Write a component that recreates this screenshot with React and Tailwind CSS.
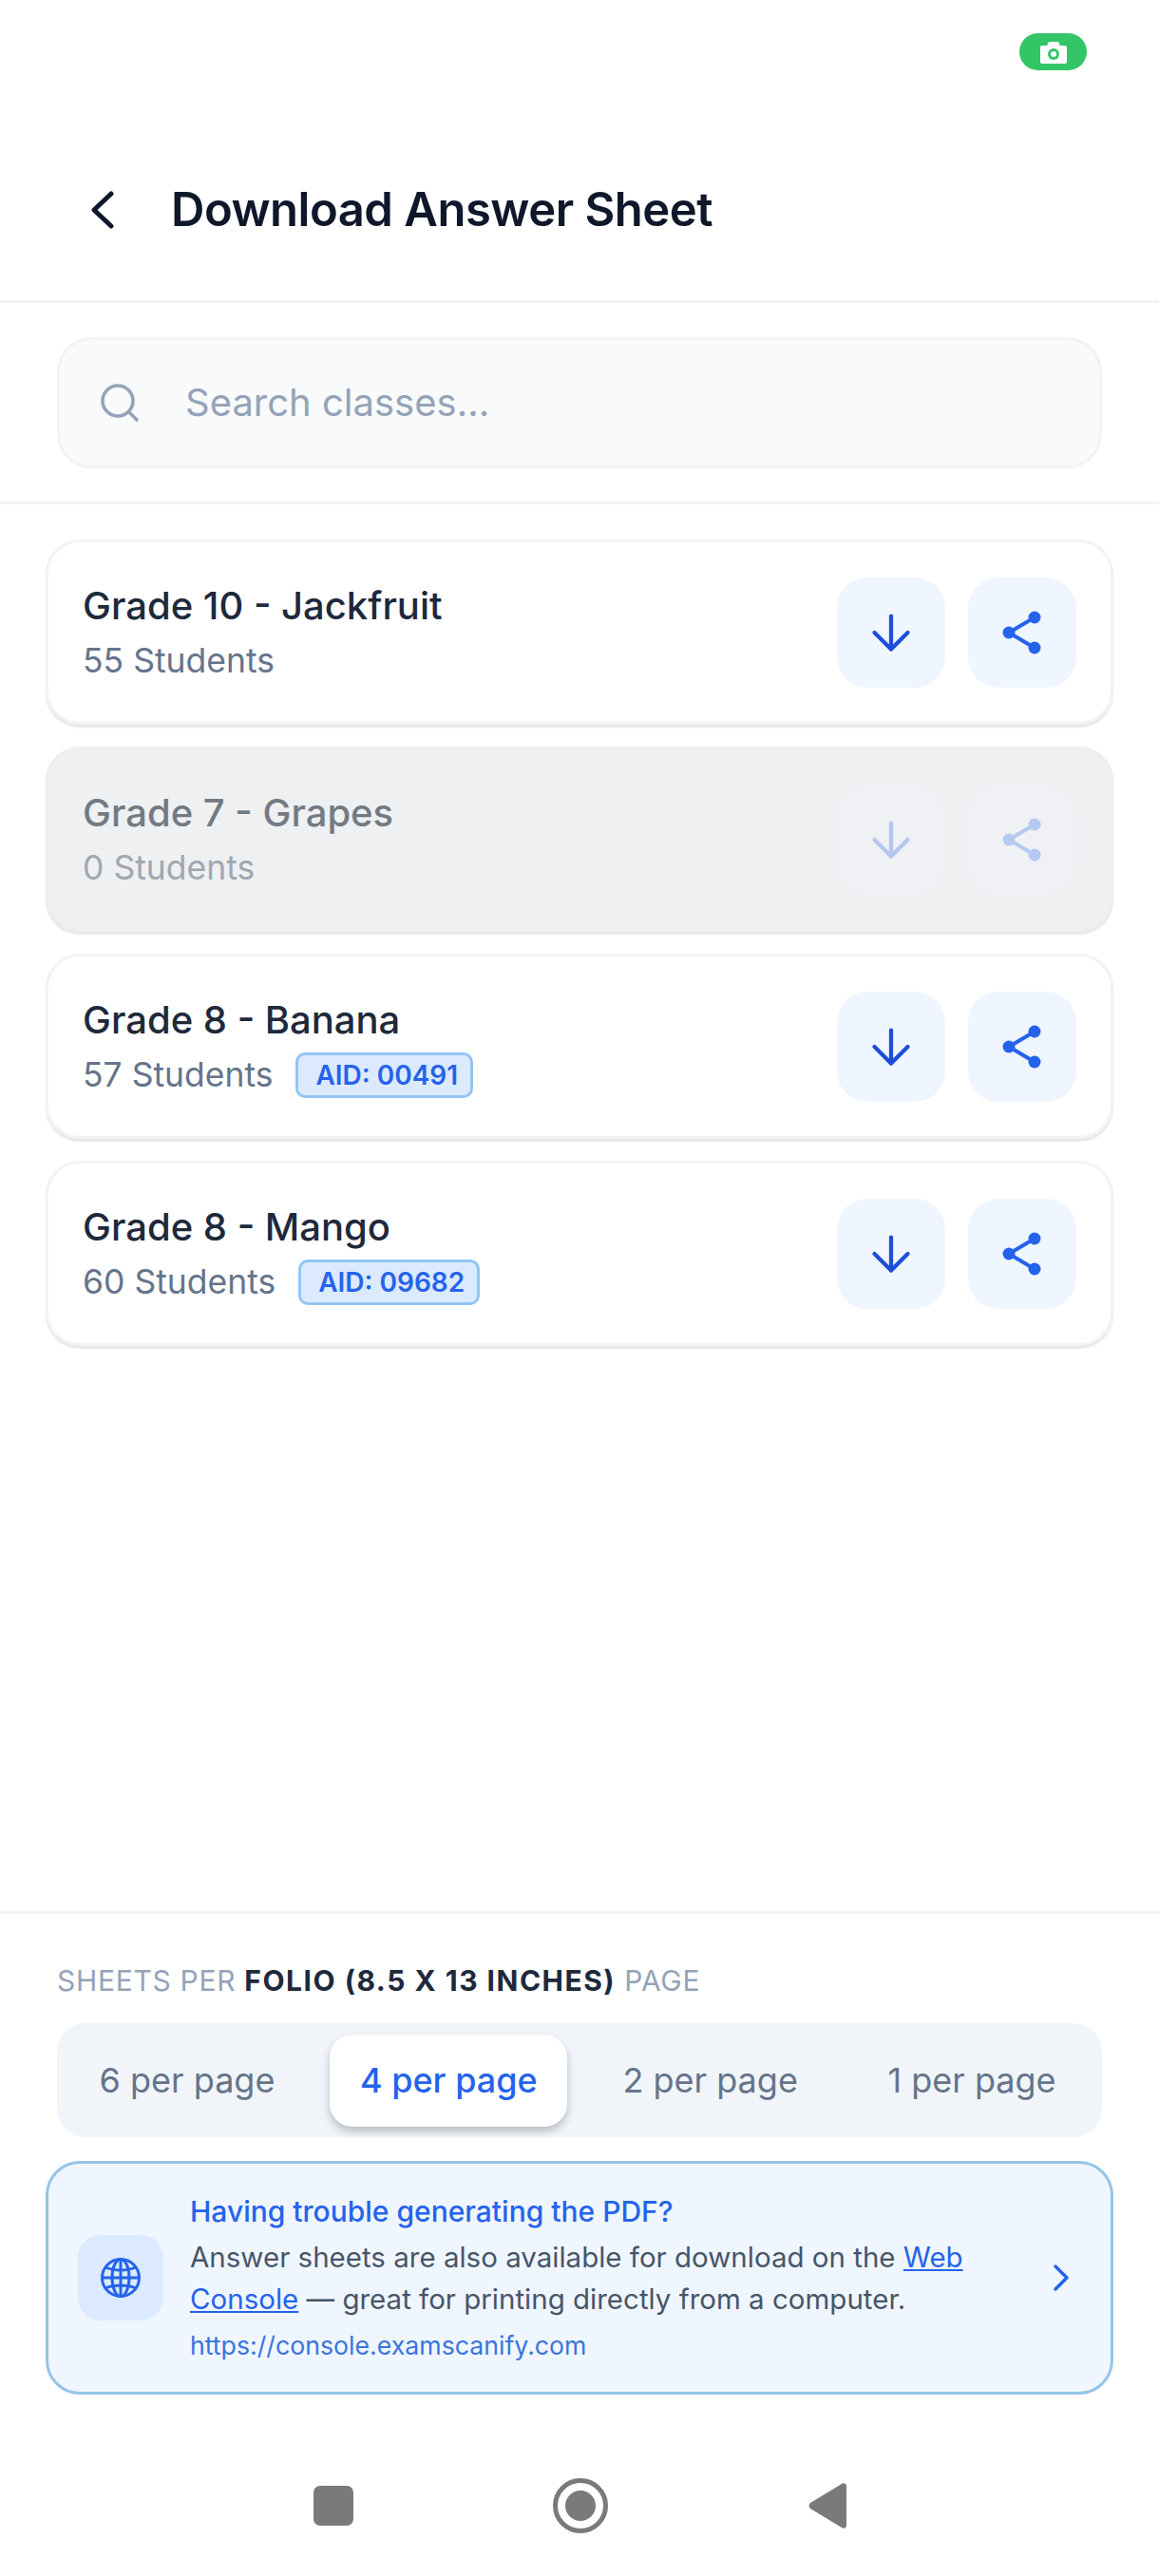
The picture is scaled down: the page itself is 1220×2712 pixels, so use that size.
import React from 'react';
import { ArrowDown, Search } from 'lucide-react';

const classes = [
  { name: 'Grade 10 - Jackfruit', students: '55 Students' },
  { name: 'Grade 7 - Grapes', students: '0 Students', disabled: true },
  { name: 'Grade 8 - Banana', students: '57 Students', aid: '00491' },
  { name: 'Grade 8 - Mango', students: '60 Students', aid: '09682' },
];

const pageOptions = ['6 per page', '4 per page', '2 per page', '1 per page'];

const ShareIcon = () => (
  <svg width="48" height="48" viewBox="0 0 48 48" fill="currentColor" stroke="currentColor">
    <path d="M37 8 10 24 37 40" fill="none" strokeWidth="4" />
    <circle cx="37" cy="8" r="6.5" strokeWidth="0" />
    <circle cx="10" cy="24" r="6.5" strokeWidth="0" />
    <circle cx="37" cy="40" r="6.5" strokeWidth="0" />
  </svg>
);

const GlobeIcon = () => (
  <svg width="44" height="44" viewBox="0 0 44 44" fill="none" stroke="currentColor" strokeWidth="3">
    <circle cx="22" cy="22" r="19.5" />
    <ellipse cx="22" cy="22" rx="9" ry="19.5" />
    <path d="M22 2.5v39M2.5 22h39M6 11c9 4 23 4 32 0M6 33c9-4 23-4 32 0" />
  </svg>
);

const ClassCard = ({ item }) => (
  <div
    className={`flex h-[195px] items-center justify-between rounded-[36px] border-[3px] pl-[36px] pr-[36px] shadow-[0_3px_2px_rgba(15,23,42,0.1)] ${
      item.disabled ? 'border-[#eceef0] bg-[#eef0f2]' : 'border-[#f1f3f5] bg-white'
    }`}
  >
    <div className="flex flex-col">
      <span className={`text-[40px] leading-[54px] font-medium ${item.disabled ? 'text-[#737a83]' : 'text-[#1e293b]'}`}>
        {item.name}
      </span>
      <div className="mt-[6px] flex h-[50px] items-center">
        <span className={`text-[35.5px] leading-[50px] ${item.disabled ? 'text-[#a1a7af]' : 'text-[#64748b]'}`}>
          {item.students}
        </span>
        {item.aid && (
          <span className="ml-[24px] flex h-[48px] items-center rounded-[10px] border-[3px] border-[#93c5f3] bg-[#dbeafe] pr-[13px] pl-[18px] text-[28px] font-semibold text-[#2563eb]">
            AID: {item.aid}
          </span>
        )}
      </div>
    </div>
    <div className="flex gap-[24px]">
      <button
        className={`flex h-[116px] w-[114px] items-center justify-center rounded-[32px] ${
          item.disabled ? 'bg-[#eff1f4] text-[#b5c7ee]' : 'bg-[#eff6ff] text-[#1d4ed8]'
        }`}
      >
        <ArrowDown size={60} strokeWidth={1.7} />
      </button>
      <button
        className={`flex h-[116px] w-[114px] items-center justify-center rounded-[32px] ${
          item.disabled ? 'bg-[#eff1f4] text-[#b5c9f2]' : 'bg-[#eff6ff] text-[#2563eb]'
        }`}
      >
        <ShareIcon />
      </button>
    </div>
  </div>
);

export default function App() {
  return (
    <div className="flex h-[2712px] w-[1220px] flex-col overflow-hidden bg-white font-['Inter','Noto_Sans',sans-serif]">
      {/* Status bar */}
      <div className="flex h-[110px] justify-end pt-[35px] pr-[76px]">
        <div className="flex h-[39px] w-[71px] items-center justify-center rounded-full bg-[#34c566]">
          <svg width="28" height="24" viewBox="0 0 28 24" fill="white">
            <path d="M9 1h10l2 4h5a2 2 0 0 1 2 2v15a2 2 0 0 1-2 2H2a2 2 0 0 1-2-2V7a2 2 0 0 1 2-2h5z" />
            <circle cx="14" cy="14" r="6" fill="#34c566" />
            <circle cx="14" cy="14" r="3" fill="white" />
          </svg>
        </div>
      </div>

      {/* Header */}
      <div className="flex h-[209px] items-center border-b-[3px] border-[#f1f3f5] pt-[16px] pl-[95px]">
        <svg width="26" height="40" viewBox="0 0 26 40" fill="none" stroke="#0f172a" strokeWidth="5" strokeLinecap="round" strokeLinejoin="round">
          <path d="M22 3 4 20l18 17" />
        </svg>
        <h1 className="ml-[59px] text-[49px] font-semibold tracking-[-0.5px] text-[#0f172a]">Download Answer Sheet</h1>
      </div>

      {/* Search */}
      <div className="border-b-[3px] border-[#f1f3f5] px-[60px] pt-[36px] pb-[35px]">
        <div className="flex h-[138px] items-center rounded-[36px] border-[3px] border-[#f1f3f5] bg-[#f8fafc] pl-[39px]">
          <Search size={48} strokeWidth={1.8} className="text-[#94a3b8]" />
          <input
            className="ml-[45px] w-[800px] bg-transparent text-[40px] text-[#334155] outline-none placeholder:text-[#94a3b8]"
            placeholder="Search classes..."
          />
        </div>
      </div>

      {/* Class list */}
      <div className="flex flex-1 flex-col gap-[23px] px-[48px] pt-[37px]">
        {classes.map((item) => (
          <ClassCard key={item.name} item={item} />
        ))}
      </div>

      {/* Footer */}
      <div className="border-t-[3px] border-[#f1f3f5] pt-[52px]">
        <p className="px-[60px] text-[30px] leading-[36px] tracking-[0.7px] text-[#94a3b8]">
          SHEETS PER <span className="font-bold tracking-[1.5px] text-[#1e293b]">FOLIO (8.5 X 13 INCHES)</span> PAGE
        </p>
        <div className="mx-[60px] mt-[27px] flex h-[120px] items-center justify-between rounded-[30px] bg-[#f1f5f9] px-[12px]">
          {pageOptions.map((option) =>
            option === '4 per page' ? (
              <span
                key={option}
                className="flex h-[97px] w-[250px] items-center justify-center rounded-[24px] bg-white text-[36px] font-medium text-[#2563eb] shadow-[0_5px_8px_rgba(15,23,42,0.25)]"
              >
                {option}
              </span>
            ) : (
              <span key={option} className="flex h-[97px] w-[250px] items-center justify-center text-[36px] text-[#64748b]">
                {option}
              </span>
            )
          )}
        </div>

        <div className="mx-[48px] mt-[25px] flex h-[246px] items-center rounded-[36px] border-[3px] border-[#93c5e8] bg-[#eff6ff] pr-[42px] pl-[31px]">
          <div className="flex h-[90px] w-[90px] shrink-0 items-center justify-center rounded-[24px] bg-[#dbeafe] text-[#2563eb]">
            <GlobeIcon />
          </div>
          <div className="ml-[28px] flex-1">
            <p className="text-[30px] leading-[42px] font-medium text-[#2563eb]">Having trouble generating the PDF?</p>
            <p className="mt-[5px] text-[29.5px] leading-[44px] text-[#475569]">
              Answer sheets are also available for download on the{' '}
              <span className="text-[#2563eb] underline">Web</span>{' '}
              <span className="text-[#2563eb] underline">Console</span> — great for printing directly from a computer.
            </p>
            <p className="mt-[7px] text-[26.7px] leading-[40px] text-[#3b74dc]">https://console.examscanify.com</p>
          </div>
          <svg width="20" height="30" viewBox="0 0 20 30" fill="none" stroke="#2563eb" strokeWidth="3.5" strokeLinecap="round" strokeLinejoin="round">
            <path d="M4 3l12 12L4 27" />
          </svg>
        </div>

        {/* Android nav */}
        <div className="flex h-[191px] items-center justify-center pt-[42px]">
          <svg width="561" height="60" viewBox="0 -6 561 60" fill="#7a7a7a">
            <rect x="0" y="3" width="42" height="42" rx="7" />
            <circle cx="281" cy="24" r="26.5" fill="none" stroke="#7a7a7a" strokeWidth="5" />
            <circle cx="281" cy="24" r="16" />
            <path d="M561 3v42a3 3 0 0 1-5 2L523 27a4 4 0 0 1 0-6L556 1a3 3 0 0 1 5 2z" />
          </svg>
        </div>
      </div>
    </div>
  );
}
